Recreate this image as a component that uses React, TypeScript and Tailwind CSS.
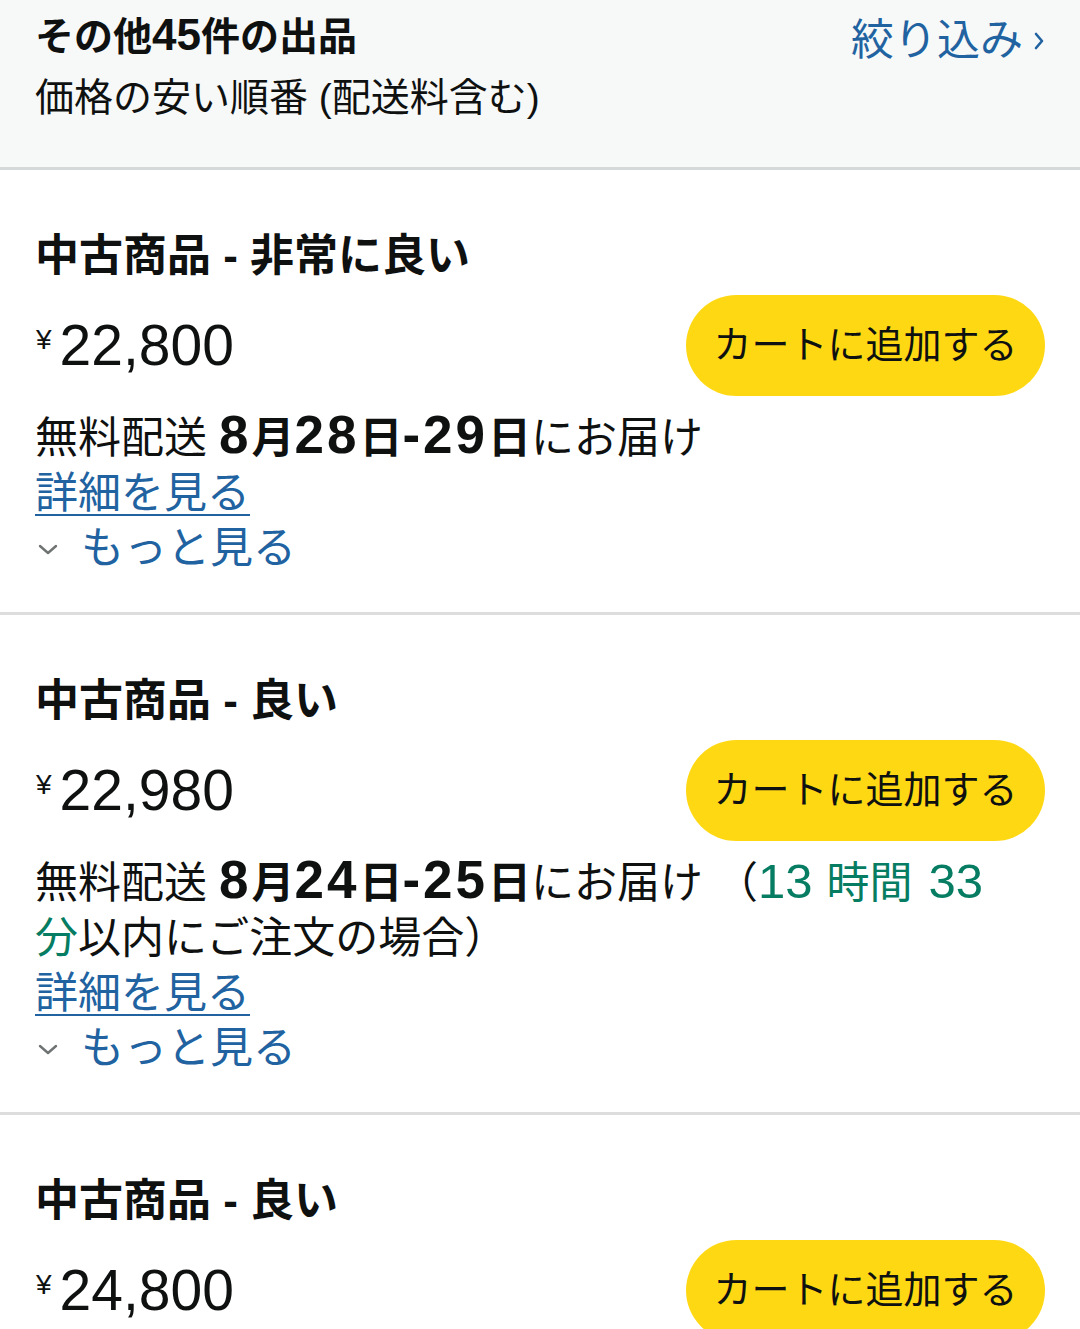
import React from "react";

const FONT = { fontFamily: '"Liberation Sans", "Noto Sans CJK JP", sans-serif' };

function D({ children, size = "text-[51px]" }: { children: React.ReactNode; size?: string }) {
  return <span className={`${size} leading-[40px]`}>{children}</span>;
}

function B({ children }: { children: React.ReactNode }) {
  return <span className="text-[53px] leading-[40px] tracking-[3px]">{children}</span>;
}

function Chevron() {
  return (
    <svg width="22" height="14" viewBox="0 0 22 14" className="mr-[22px] ml-[2px]">
      <polyline points="3,4 11,11 19,4" fill="none" stroke="#6f7373" strokeWidth="2.4" strokeLinecap="round" strokeLinejoin="round" />
    </svg>
  );
}

function Offer({ title, price, children, last }: { title: string; price: string; children: React.ReactNode; last?: boolean }) {
  return (
    <div className={`px-[35px] pt-[58px] pb-[36px] ${last ? "" : "border-b-[3px] border-[#dddddd]"}`}>
      <div className="text-[44px] leading-[55px] font-bold text-[#0f1111]">{title}</div>
      <div className="mt-[12px] flex items-center justify-between">
        <div className="flex items-start text-[#0f1111] leading-none">
          <span className="text-[28px] mt-[9px] mr-[8px] ml-[1px]">¥</span>
          <span className="text-[57px]">{price}</span>
        </div>
        <div className="w-[359px] h-[101px] rounded-full bg-[#ffd814] flex items-center justify-center text-[38px] text-[#0f1111]">
          カートに追加する
        </div>
      </div>
      <div className="mt-[15px] text-[43px] leading-[55px] text-[#0f1111]">{children}</div>
      <div className="text-[43px] leading-[55px] text-[#2162a1] underline decoration-[2px] underline-offset-[6px]">
        詳細を見る
      </div>
      <div className="flex items-center text-[43px] leading-[55px] text-[#2162a1]">
        <Chevron />
        もっと見る
      </div>
    </div>
  );
}

export default function App() {
  return (
    <div className="w-[1080px] h-[1329px] overflow-hidden bg-white" style={FONT}>
      <div className="bg-[#f7f8f8] border-b-[3px] border-[#d5d9d9] h-[170px] px-[35px] pt-[12px] flex justify-between">
        <div>
          <div className="text-[39px] leading-[50px] font-bold text-[#0f1111]">
            その他<D size="text-[44px]">45</D>件の出品
          </div>
          <div className="mt-[11px] text-[39px] leading-[50px] text-[#0f1111]">価格の安い順番 (配送料含む)</div>
        </div>
        <div className="text-[43px] leading-[56px] text-[#2162a1] flex items-center h-[56px]">
          絞り込み
          <svg width="12" height="22" viewBox="0 0 12 22" className="ml-[10px] mt-[2px]">
            <polyline points="3,4 9,11 3,18" fill="none" stroke="#2162a1" strokeWidth="2.6" strokeLinecap="round" strokeLinejoin="round" />
          </svg>
        </div>
      </div>

      <Offer title="中古商品 - 非常に良い" price="22,800">
        無料配送 <span className="font-bold"><B>8</B>月<B>28</B>日<B>-29</B>日</span>にお届け
      </Offer>

      <Offer title="中古商品 - 良い" price="22,980">
        無料配送 <span className="font-bold"><B>8</B>月<B>24</B>日<B>-25</B>日</span>にお届け （
        <span className="text-[#067d62]"><D size="text-[49px]">13</D><span className="ml-[14px]">時間</span><D size="text-[49px]"><span className="ml-[16px]">33</span></D><br />分</span>以内にご注文の場合）
      </Offer>

      <Offer title="中古商品 - 良い" price="24,800" last>
        無料配送 <span className="font-bold"><B>8</B>月<B>20</B>日<B>-21</B>日</span>にお届け
      </Offer>
    </div>
  );
}
